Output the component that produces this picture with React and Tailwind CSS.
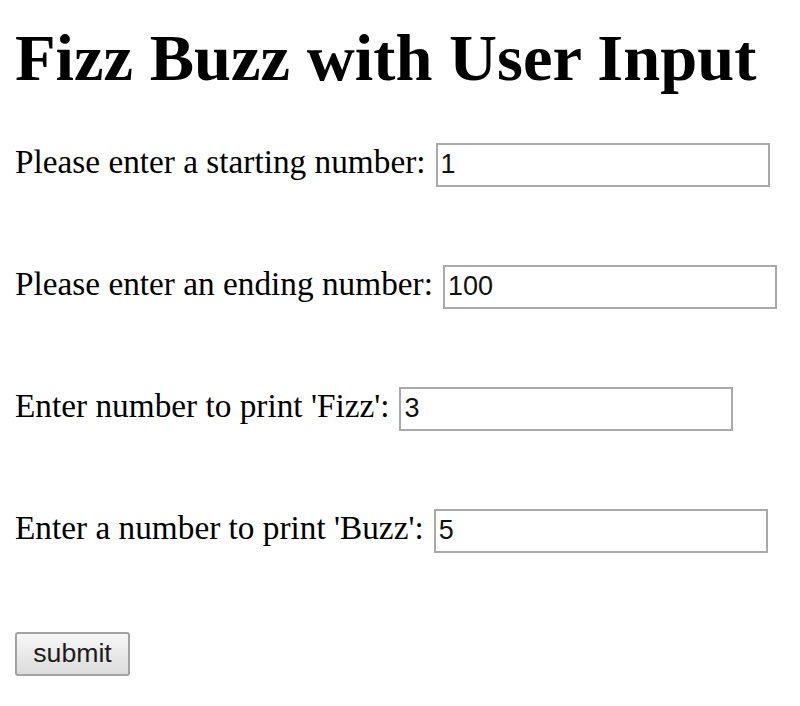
import { useState } from "react";

const fields = [
  { name: "start", label: "Please enter a starting number:", value: "1" },
  { name: "end", label: "Please enter an ending number:", value: "100" },
  { name: "fizz", label: "Enter number to print 'Fizz':", value: "3" },
  { name: "buzz", label: "Enter a number to print 'Buzz':", value: "5" },
];

const App = () => {
  const [values, setValues] = useState(
    Object.fromEntries(fields.map((f) => [f.name, f.value]))
  );

  const handleSubmit = (e) => {
    e.preventDefault();
  };

  return (
    <div className="min-h-[706px] bg-white pl-[15px] pt-[25px] font-['Liberation_Serif','Times_New_Roman',serif] text-black">
      <h1 className="text-[66.5px] font-bold leading-none">Fizz Buzz with User Input</h1>

      <form onSubmit={handleSubmit} className="mt-[51px] flex flex-col items-start gap-[78px]">
        {fields.map((field) => (
          <div key={field.name} className="flex h-[44px] items-baseline gap-[10px]">
            <label htmlFor={field.name} className="text-[33.3px] leading-none">
              {field.label}
            </label>
            <input
              id={field.name}
              type="text"
              value={values[field.name]}
              onChange={(e) => setValues({ ...values, [field.name]: e.target.value })}
              className="h-[44px] w-[334px] border-2 border-[#a9a9a9] bg-white px-[3px] font-['Liberation_Sans',Arial,sans-serif] text-[27px] text-[#111] outline-none"
            />
          </div>
        ))}

        <button
          type="submit"
          className="mt-[1px] h-[44px] w-[115px] rounded-[3px] border-2 border-[#a3a3a3] bg-gradient-to-b from-[#f7f7f7] to-[#dcdcdc] font-['Liberation_Sans',Arial,sans-serif] text-[26.67px] leading-none text-[#1c1c1c]"
        >
          submit
        </button>
      </form>
    </div>
  );
};

export default App;
